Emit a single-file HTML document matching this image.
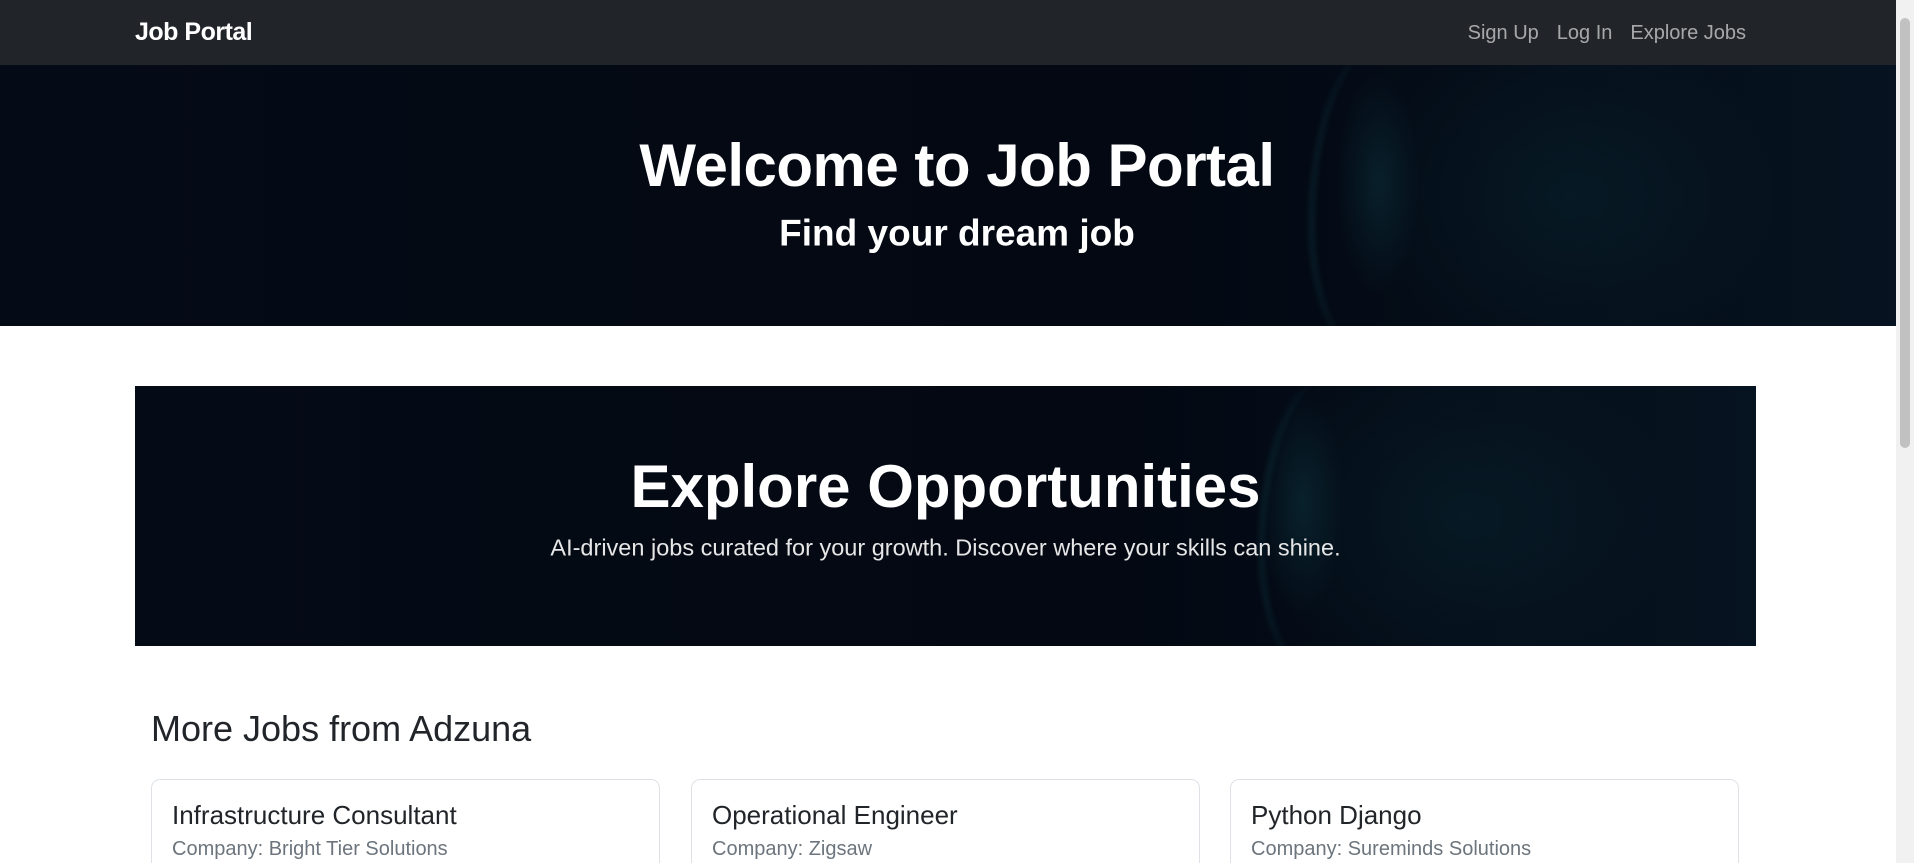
<!DOCTYPE html>
<html><head><meta charset="utf-8"><style>
*{box-sizing:border-box;margin:0;padding:0}
html{width:1914px;height:863px;overflow:hidden}
body{width:1914px;height:863px;overflow:hidden;font-family:"Liberation Sans",sans-serif;background:#fff;position:relative;color:#212529}
.nav{height:65px;background:#212529;position:relative}
.brand{position:absolute;left:135px;top:18px;color:#fff;font-weight:bold;font-size:25px;letter-spacing:-0.5px}
.links{position:absolute;right:168px;top:22px;font-size:20px;color:rgba(255,255,255,.6)}
.links span{margin-left:18px}
.bg{background:
 radial-gradient(ellipse 60px 160px at 72% 45%,rgba(20,90,100,.25),transparent 70%),
 radial-gradient(ellipse 300px 250px at 82% 50%,rgba(10,50,60,.3),transparent 70%),
 linear-gradient(90deg,#050b16,#030812 60%,#061320);position:relative;overflow:hidden;color:#fff;text-align:center}
.hero{height:261px}
.face{position:absolute;border-left:3px solid rgba(30,120,130,.3);border-radius:60% 0 0 40%;filter:blur(3px)}
.h1{position:absolute;left:0;right:0;top:101px;font-size:60px;font-weight:bold;line-height:1;letter-spacing:-0.5px;transform:translateY(-50%)}
.h2{position:absolute;left:0;right:0;top:168px;font-size:37px;font-weight:bold;line-height:1;transform:translateY(-50%)}
.banner{position:absolute;left:135px;top:386px;width:1621px;height:260px}
.b1{position:absolute;left:0;right:0;top:101px;font-size:60px;font-weight:bold;line-height:1;transform:translateY(-50%)}
.b2{position:absolute;left:0;right:0;top:162px;font-size:23.5px;color:#e6e6e6;line-height:1;transform:translateY(-50%)}
.more{position:absolute;left:151px;top:709px;font-size:36px;line-height:1.1}
.card{position:absolute;top:779px;width:509px;height:84px;border:1px solid #dee2e6;border-bottom:none;border-radius:9px 9px 0 0;padding:22px 20px}
.card .t{font-size:26px;line-height:1}
.card .c{font-size:20px;color:#6c757d;margin-top:10px}
.sb{position:absolute;right:0;top:0;width:18px;height:863px;background:#f1f1f1}
.sb div{position:absolute;left:4px;top:18px;width:10px;height:430px;background:#c1c1c1;border-radius:5px}
</style></head><body>
<div class="nav"><div class="brand">Job Portal</div><div class="links"><span>Sign Up</span><span>Log In</span><span>Explore Jobs</span></div></div>
<div class="bg hero">
<div class="face" style="left:1310px;top:-20px;width:120px;height:300px"></div>
<div class="h1">Welcome to Job Portal</div>
<div class="h2">Find your dream job</div>
</div>
<div class="bg banner">
<div class="face" style="left:1125px;top:-10px;width:120px;height:290px"></div>
<div class="b1">Explore Opportunities</div>
<div class="b2">AI-driven jobs curated for your growth. Discover where your skills can shine.</div>
</div>
<div class="more">More Jobs from Adzuna</div>
<div class="card" style="left:151px"><div class="t">Infrastructure Consultant</div><div class="c">Company: Bright Tier Solutions</div></div>
<div class="card" style="left:691px"><div class="t">Operational Engineer</div><div class="c">Company: Zigsaw</div></div>
<div class="card" style="left:1230px"><div class="t">Python Django</div><div class="c">Company: Sureminds Solutions</div></div>
<div class="sb"><div></div></div>
</body></html>
